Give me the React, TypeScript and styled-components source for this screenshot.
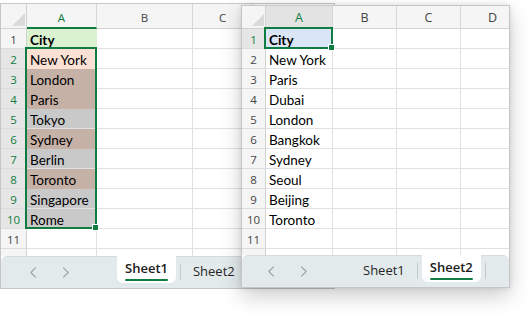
import React from 'react';
import styled, { createGlobalStyle, css } from 'styled-components';

const GREEN = '#107c41';

const Global = createGlobalStyle`
  html, body { margin: 0; padding: 0; background: #fff; }
  body { width: 528px; height: 314px; overflow: hidden; font-family: "Liberation Sans", Arial, sans-serif; }
  #root { width: 528px; height: 314px; }
`;

type CellData = { text: string; bold?: boolean; fill?: string };
type Col = { label: string; w: number };
type SheetCfg = {
  x: number; y: number; w: number; h: number; raised?: boolean;
  rowHeaderW: number; headerH: number; colFont: number; cornerSize: number;
  cols: Col[]; cells: CellData[];
  sel: { col: number; r1: number; r2: number; active: number };
  underline: boolean; navPad: number;
  tabs: string[]; activeTab: number;
};

const Stage = styled.div`
  position: relative;
  width: 528px;
  height: 314px;
  overflow: hidden;
  background: #fff;
`;

const Window = styled.section<{ $x: number; $y: number; $w: number; $h: number; $raised?: boolean }>`
  position: absolute;
  left: ${p => p.$x}px;
  top: ${p => p.$y}px;
  width: ${p => p.$w}px;
  height: ${p => p.$h}px;
  box-sizing: border-box;
  display: flex;
  flex-direction: column;
  background: #fff;
  border: 1px solid #c6c6c6;
  ${p => p.$raised && css`
    box-shadow: 0 8px 20px rgba(0, 0, 0, 0.2), 0 0 5px rgba(0, 0, 0, 0.1);
  `}
`;

const SheetArea = styled.div`
  position: relative;
  flex: 1 1 auto;
  min-height: 0;
  overflow: hidden;
`;

const Grid = styled.div<{ $cols: string; $headerH: number }>`
  display: grid;
  grid-template-columns: ${p => p.$cols};
  grid-template-rows: ${p => p.$headerH}px;
  grid-auto-rows: 20px;
`;

const Corner = styled.div`
  box-sizing: border-box;
  background: #f5f5f5;
  border-right: 1px solid #d2d2d2;
  border-bottom: 1px solid #d2d2d2;
  display: flex;
  justify-content: flex-end;
  align-items: flex-end;
  padding: 0 1px 2px 0;
`;

const ColHeader = styled.div<{ $sel: boolean; $underline: boolean; $fs: number }>`
  box-sizing: border-box;
  background: ${p => (p.$sel && !p.$underline ? '#e3e3e3' : '#f5f5f5')};
  color: ${p => (p.$sel ? GREEN : '#444')};
  border-right: 1px solid #d6d6d6;
  border-bottom: ${p => (p.$underline ? `2px solid ${GREEN}` : '1px solid #d2d2d2')};
  font-family: "Open Sans", "Liberation Sans", sans-serif;
  font-size: ${p => p.$fs}px;
  line-height: 16px;
  text-align: center;
  display: flex;
  align-items: flex-end;
  justify-content: center;
  padding-bottom: ${p => (p.$underline ? 1 : 2)}px;
`;

const RowHeader = styled.div<{ $sel: boolean }>`
  box-sizing: border-box;
  background: ${p => (p.$sel ? '#e6e6e6' : '#f5f5f5')};
  color: ${p => (p.$sel ? GREEN : '#444')};
  border-right: 1px solid #d2d2d2;
  border-bottom: 1px solid #dcdcdc;
  font-family: "Open Sans", "Liberation Sans", sans-serif;
  font-size: 11.5px;
  line-height: 19px;
  padding-top: 1px;
  text-align: center;
`;

const Cell = styled.div<{ $fill?: string; $bold?: boolean; $tint: boolean }>`
  box-sizing: border-box;
  background-color: ${p => p.$fill ?? '#fff'};
  ${p => p.$tint && css`
    background-image: linear-gradient(rgba(0, 0, 0, 0.21), rgba(0, 0, 0, 0.21));
  `}
  border-right: 1px solid ${p => (p.$fill ? 'transparent' : '#e1e1e1')};
  border-bottom: 1px solid ${p => (p.$fill ? 'transparent' : '#e1e1e1')};
  font-family: Lato, "Liberation Sans", sans-serif;
  font-size: 13.5px;
  font-weight: ${p => (p.$bold ? 700 : 400)};
  color: #000;
  line-height: 18px;
  padding: 2px 0 0 3px;
  white-space: nowrap;
`;

const Selection = styled.div`
  position: absolute;
  box-sizing: border-box;
  border: 2px solid ${GREEN};
  pointer-events: none;
`;

const FillHandle = styled.div`
  position: absolute;
  right: -4px;
  bottom: -4px;
  width: 7px;
  height: 7px;
  box-sizing: border-box;
  background: ${GREEN};
  border: 1px solid #fff;
`;

const TabBar = styled.div<{ $pad: number }>`
  flex: 0 0 32px;
  height: 32px;
  box-sizing: border-box;
  display: flex;
  align-items: flex-start;
  background: #e3eaec;
  border-top: 1px solid #d5dcdf;
  border-radius: 6px 6px 0 0;
  padding-left: ${p => p.$pad}px;
`;

const Nav = styled.div`
  display: flex;
  gap: 13px;
  margin-top: 5px;
`;

const NavButton = styled.div`
  width: 20px;
  height: 20px;
  display: flex;
  align-items: center;
  justify-content: center;
  color: #9aa2a5;
`;

const TabList = styled.div`
  display: flex;
  align-items: flex-start;
  margin-left: 41px;
`;

const Tab = styled.div<{ $active: boolean }>`
  display: flex;
  flex-direction: column;
  align-items: stretch;
  padding: 0 8px;
  box-sizing: border-box;
  ${p => p.$active
    ? css`
        margin-top: -1px;
        height: 27px;
        padding-top: 4px;
        background: #fff;
        border-radius: 0 0 6px 6px;
      `
    : css`
        height: 31px;
        padding-top: 6px;
      `}
`;

const TabLabel = styled.span<{ $active: boolean }>`
  font-family: "Open Sans", "Liberation Sans", sans-serif;
  font-size: 13px;
  line-height: 16px;
  font-weight: ${p => (p.$active ? 600 : 400)};
  color: ${p => (p.$active ? '#1a1a1a' : '#262626')};
  white-space: nowrap;
`;

const TabUnderline = styled.span`
  display: block;
  height: 2px;
  margin-top: 3px;
  border-radius: 1px;
  background: ${GREEN};
`;

const Divider = styled.span`
  width: 1px;
  height: 16px;
  margin: 7px 4px 0;
  background: #c3cacd;
`;

const Chevron = ({ dir }: { dir: 'left' | 'right' }) => (
  <svg width="8" height="11" viewBox="0 0 8 11" fill="none">
    <path
      d={dir === 'left' ? 'M6.5 0.8 L1.8 5.5 L6.5 10.2' : 'M1.5 0.8 L6.2 5.5 L1.5 10.2'}
      stroke="currentColor"
      strokeWidth="1.1"
      strokeLinecap="round"
      strokeLinejoin="round"
    />
  </svg>
);

const CornerMark = ({ size }: { size: number }) => (
  <svg width={size} height={size} viewBox={`0 0 ${size} ${size}`}>
    <polygon points={`${size},0 ${size},${size} 0,${size}`} fill="#dadada" />
  </svg>
);

const ROWS = Array.from({ length: 12 }, (_, i) => i + 1);

function Sheet({ cfg }: { cfg: SheetCfg }) {
  const { sel } = cfg;
  const colTemplate = [cfg.rowHeaderW, ...cfg.cols.map(c => c.w)].map(w => `${w}px`).join(' ');
  const selLeft = cfg.rowHeaderW + cfg.cols.slice(0, sel.col).reduce((s, c) => s + c.w, 0) - 2;
  const selTop = cfg.headerH + (sel.r1 - 1) * 20 - 2;
  const selWidth = cfg.cols[sel.col].w + 2;
  const selHeight = (sel.r2 - sel.r1 + 1) * 20 + 2;

  return (
    <Window $x={cfg.x} $y={cfg.y} $w={cfg.w} $h={cfg.h} $raised={cfg.raised}>
      <SheetArea>
        <Grid $cols={colTemplate} $headerH={cfg.headerH}>
          <Corner>
            <CornerMark size={cfg.cornerSize} />
          </Corner>
          {cfg.cols.map((c, i) => (
            <ColHeader key={c.label} $sel={i === sel.col} $underline={cfg.underline && i === sel.col} $fs={cfg.colFont}>
              {c.label}
            </ColHeader>
          ))}
          {ROWS.map(r => (
            <React.Fragment key={r}>
              <RowHeader $sel={r >= sel.r1 && r <= sel.r2}>{r}</RowHeader>
              {cfg.cols.map((c, i) => {
                const d = i === 0 ? cfg.cells[r - 1] : undefined;
                const tint = i === sel.col && r >= sel.r1 && r <= sel.r2 && r !== sel.active;
                return (
                  <Cell key={c.label} $fill={d?.fill} $bold={d?.bold} $tint={tint}>
                    {d?.text}
                  </Cell>
                );
              })}
            </React.Fragment>
          ))}
        </Grid>
        <Selection style={{ left: selLeft, top: selTop, width: selWidth, height: selHeight }}>
          <FillHandle />
        </Selection>
      </SheetArea>
      <TabBar $pad={cfg.navPad}>
        <Nav>
          <NavButton><Chevron dir="left" /></NavButton>
          <NavButton><Chevron dir="right" /></NavButton>
        </Nav>
        <TabList>
          {cfg.tabs.map((t, i) => (
            <React.Fragment key={t}>
              {i > 0 && <Divider />}
              <Tab $active={i === cfg.activeTab}>
                <TabLabel $active={i === cfg.activeTab}>{t}</TabLabel>
                {i === cfg.activeTab && <TabUnderline />}
              </Tab>
            </React.Fragment>
          ))}
          <Divider />
        </TabList>
      </TabBar>
    </Window>
  );
}

const PEACH = '#fbe0d4';

const sheet1: SheetCfg = {
  x: 0, y: 3, w: 335, h: 286,
  rowHeaderW: 26, headerH: 25, colFont: 11.5, cornerSize: 13,
  cols: [{ label: 'A', w: 70 }, { label: 'B', w: 96 }, { label: 'C', w: 60 }],
  cells: [
    { text: 'City', bold: true, fill: '#daf2d0' },
    { text: 'New York', fill: PEACH },
    { text: 'London', fill: PEACH },
    { text: 'Paris', fill: PEACH },
    { text: 'Tokyo' },
    { text: 'Sydney', fill: PEACH },
    { text: 'Berlin' },
    { text: 'Toronto', fill: PEACH },
    { text: 'Singapore' },
    { text: 'Rome' },
  ],
  sel: { col: 0, r1: 2, r2: 10, active: 2 },
  underline: true, navPad: 22,
  tabs: ['Sheet1', 'Sheet2'], activeTab: 0,
};

const sheet2: SheetCfg = {
  x: 241, y: 5, w: 269, h: 283, raised: true,
  rowHeaderW: 24, headerH: 23, colFont: 12.5, cornerSize: 12,
  cols: [{ label: 'A', w: 67 }, { label: 'B', w: 64 }, { label: 'C', w: 64 }, { label: 'D', w: 64 }],
  cells: [
    { text: 'City', bold: true, fill: '#dae5f5' },
    { text: 'New York' },
    { text: 'Paris' },
    { text: 'Dubai' },
    { text: 'London' },
    { text: 'Bangkok' },
    { text: 'Sydney' },
    { text: 'Seoul' },
    { text: 'Beijing' },
    { text: 'Toronto' },
  ],
  sel: { col: 0, r1: 1, r2: 1, active: 1 },
  underline: false, navPad: 19,
  tabs: ['Sheet1', 'Sheet2'], activeTab: 1,
};

export default function App() {
  return (
    <>
      <Global />
      <Stage>
        <Sheet cfg={sheet1} />
        <Sheet cfg={sheet2} />
      </Stage>
    </>
  );
}
